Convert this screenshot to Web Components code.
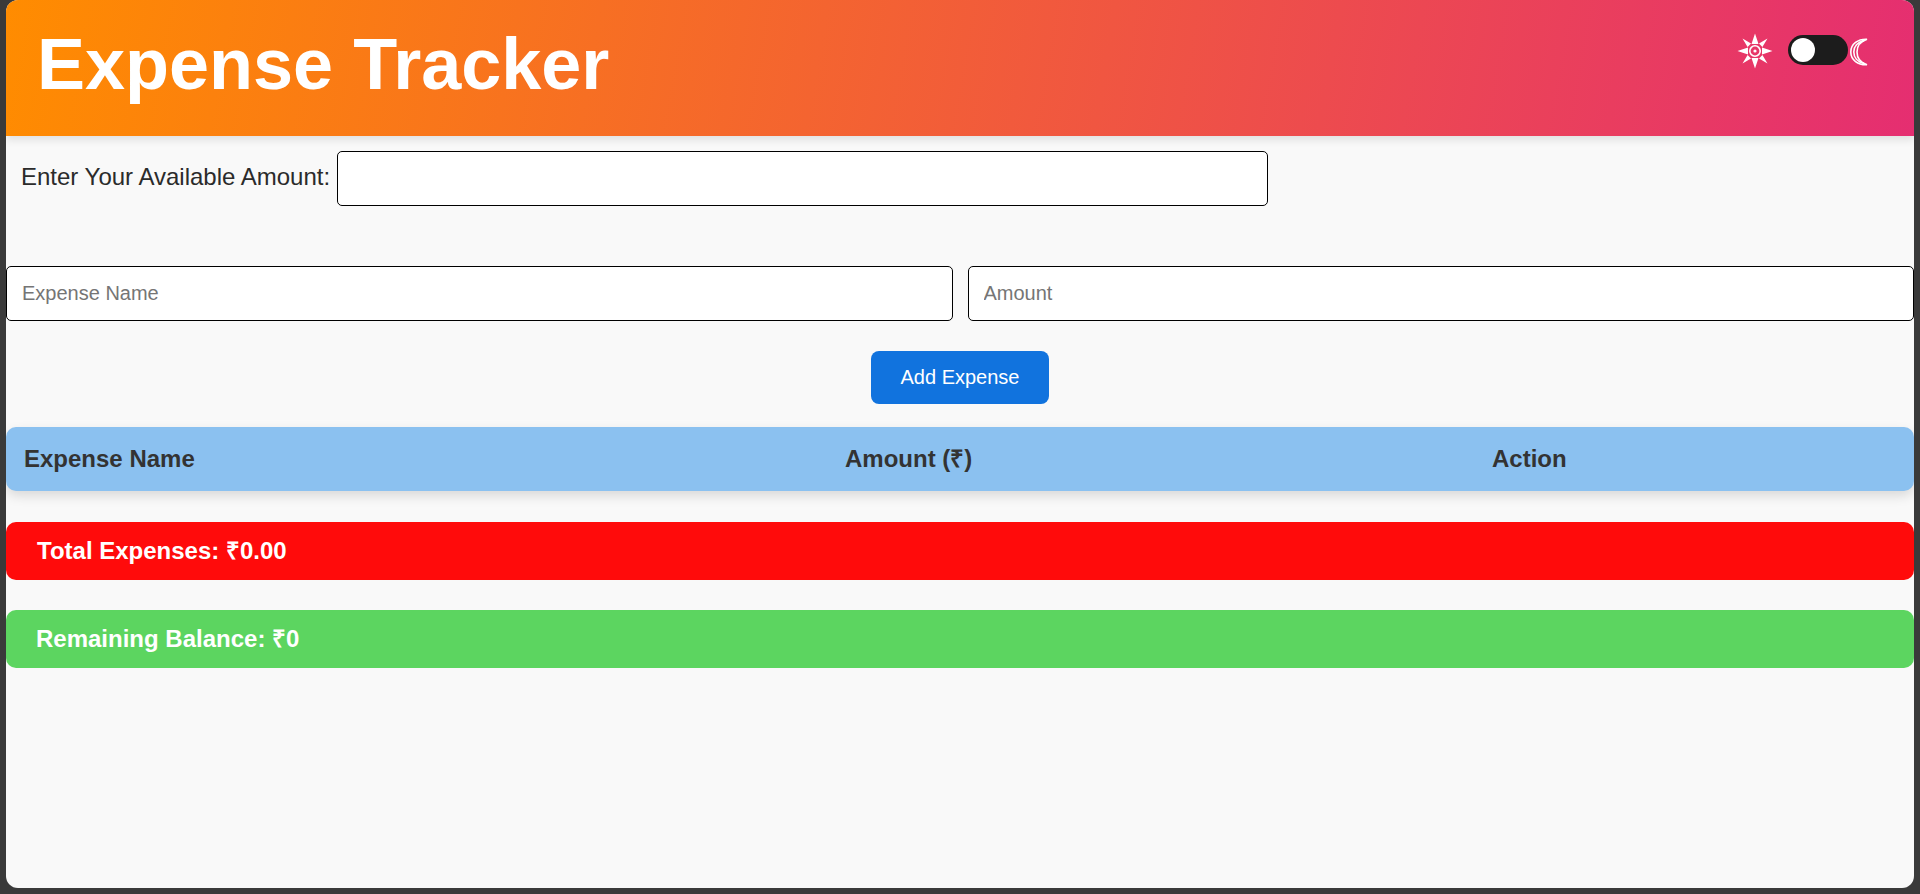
<!DOCTYPE html>
<html lang="en">
<head>
<meta charset="utf-8">
<title>Expense Tracker</title>
<style>
    html, body { margin: 0; height: 100%; background: #3a3a3a; }
    body { font-family: "Liberation Sans", Arial, sans-serif; overflow: hidden; }
</style>
</head>
<body>
<expense-app>
    <app-header slot="header">Expense Tracker</app-header>
    <budget-row></budget-row>
    <expense-form></expense-form>
    <expense-table></expense-table>
    <summary-bar style="--bar-bg:#ff0b0b;--bar-pad:31px;--bar-gap:31px">Total Expenses: ₹0.00</summary-bar>
    <summary-bar style="--bar-bg:#5cd560;--bar-pad:30px;--bar-gap:30px">Remaining Balance: ₹0</summary-bar>
</expense-app>

<script>
class ExpenseApp extends HTMLElement {
    constructor() {
        super();
        this.attachShadow({mode: "open"}).innerHTML = `
        <style>
        :host {
            display: block;
            box-sizing: border-box;
            height: 888px;
            margin: 0 6px;
            background: #f9f9f9;
            border-radius: 12px;
            overflow: hidden;
        }
        </style>
        <slot name="header"></slot>
        <slot></slot>`;
    }
}

class AppHeader extends HTMLElement {
    constructor() {
        super();
        this.attachShadow({mode: "open"}).innerHTML = `
        <style>
        :host {
            display: flex;
            justify-content: space-between;
            align-items: flex-start;
            box-sizing: border-box;
            height: 136px;
            padding: 0 46px 0 31px;
            background: linear-gradient(100deg, #ff8c00, #e52e71);
            box-shadow: 0 4px 8px rgba(0, 0, 0, 0.1);
            position: relative;
        }
        h1 {
            margin: 0;
            padding-top: 23px;
            font-size: 72px;
            line-height: 83px;
            font-weight: 700;
            color: #fff;
        }
        .toggle { display: flex; align-items: center; margin-top: 32px; }
        .sun { width: 36px; height: 36px; margin: 1px 15px -1px 0; display: block; }
        .track {
            width: 60px;
            height: 30px;
            background: #1c1c1c;
            border-radius: 15px;
            padding: 3px;
            box-sizing: border-box;
        }
        .knob { width: 24px; height: 24px; background: #fff; border-radius: 50%; }
        .moon { width: 18px; height: 28px; margin: 3px 0 0 2px; display: block; }
        </style>
        <h1><slot></slot></h1>
        <div class="toggle">
            <svg class="sun" viewBox="0 0 36 36" fill="#fff">
                <path d="M18 .5L21.5 11h-7zM18 35.5L14.5 25h7zM.5 18L11 14.5v7zM35.5 18L25 21.5v-7zM5.5 5.5l8.5 5.1-3.4 3.4zM30.5 30.5L22 25.4l3.4-3.4zM30.5 5.5l-5.1 8.5-3.4-3.4zM5.5 30.5l5.1-8.5 3.4 3.4z"/>
                <circle cx="18" cy="18" r="5.2" fill="none" stroke="#fff" stroke-width="1.6"/>
                <circle cx="18" cy="18" r="1.6"/>
            </svg>
            <div class="track"><div class="knob"></div></div>
            <svg class="moon" viewBox="0 0 18 28" fill="none" stroke="#fff" stroke-width="1.6">
                <path d="M17 1.2C8 .8 .8 6 .8 14S8 27.2 17 26.8C11.5 25 7 20.5 7 14S11.5 3 17 1.2z"/>
                <path d="M14 2.6C7.5 4 3.8 8.5 3.8 14S7.5 24 14 25.4"/>
            </svg>
        </div>`;
    }
}

class BudgetRow extends HTMLElement {
    constructor() {
        super();
        this.attachShadow({mode: "open"}).innerHTML = `
        <style>
        :host {
            display: flex;
            align-items: center;
            gap: 7px;
            padding: 15px 0 0 15px;
            color: #2b2b2b;
            font-size: 24px;
        }
        label { padding-bottom: 3px; }
        input {
            box-sizing: border-box;
            width: 931px;
            height: 55px;
            border: 1px solid #000;
            border-radius: 5px;
            background: #fff;
        }
        </style>
        <label for="budget">Enter Your Available Amount:</label>
        <input id="budget" type="number">`;
    }
}

class ExpenseForm extends HTMLElement {
    constructor() {
        super();
        this.attachShadow({mode: "open"}).innerHTML = `
        <style>
        :host { display: block; padding-top: 60px; }
        .inputs { display: flex; gap: 15px; }
        input {
            flex: 1;
            min-width: 0;
            box-sizing: border-box;
            height: 55px;
            padding: 0 15px;
            border: 1px solid #000;
            border-radius: 5px;
            background: #fff;
            font: 20px "Liberation Sans", Arial, sans-serif;
        }
        input::placeholder { color: #757575; opacity: 1; }
        .actions { display: flex; justify-content: center; padding-top: 30px; }
        button {
            width: 178px;
            height: 53px;
            border: 0;
            border-radius: 8px;
            background: #1173de;
            color: #fff;
            font: 20px "Liberation Sans", Arial, sans-serif;
        }
        </style>
        <div class="inputs">
            <input type="text" placeholder="Expense Name">
            <input type="number" placeholder="Amount">
        </div>
        <div class="actions"><button type="button">Add Expense</button></div>`;
    }
}

class ExpenseTable extends HTMLElement {
    constructor() {
        super();
        this.attachShadow({mode: "open"}).innerHTML = `
        <style>
        :host {
            display: grid;
            grid-template-columns: 821px 647px 1fr;
            align-items: center;
            box-sizing: border-box;
            height: 64px;
            margin-top: 23px;
            padding-left: 18px;
            background: #8bc1f0;
            border-radius: 10px;
            box-shadow: 0 5px 12px rgba(0, 0, 0, 0.13);
            color: #333;
            font-size: 24px;
            line-height: 28px;
            font-weight: 700;
        }
        /* the rupee glyph comes from a fallback font and would push the line box down */
        div { height: 28px; overflow: visible; }
        </style>
        <div>Expense Name</div>
        <div>Amount (₹)</div>
        <div>Action</div>`;
    }
}

class SummaryBar extends HTMLElement {
    constructor() {
        super();
        this.attachShadow({mode: "open"}).innerHTML = `
        <style>
        :host {
            display: block;
            box-sizing: border-box;
            height: 58px;
            margin-top: var(--bar-gap);
            padding: 15px 0 0 var(--bar-pad);
            background: var(--bar-bg);
            border-radius: 10px;
            color: #fff;
            font-size: 24px;
            line-height: 28px;
            font-weight: 700;
        }
        </style>
        <slot></slot>`;
    }
}

customElements.define("expense-app", ExpenseApp);
customElements.define("app-header", AppHeader);
customElements.define("budget-row", BudgetRow);
customElements.define("expense-form", ExpenseForm);
customElements.define("expense-table", ExpenseTable);
customElements.define("summary-bar", SummaryBar);
</script>
</body>
</html>
